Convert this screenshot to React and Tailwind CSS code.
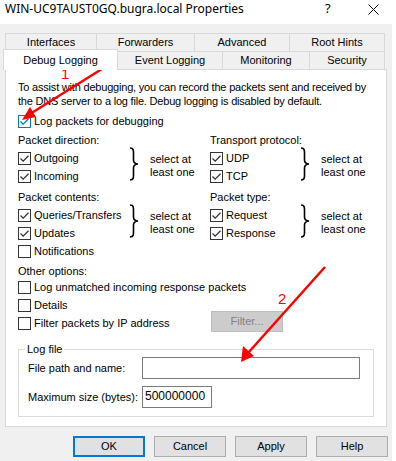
import React from "react";

const F = { fontFamily: '"Liberation Sans", Arial, sans-serif' };

function Check({ checked, blue }) {
  const c = blue ? "#0078d7" : "#333333";
  return (
    <span
      className={`inline-flex w-[13px] h-[13px] shrink-0 bg-white border items-center justify-center ${blue ? "border-[#0078d7]" : "border-[#333333]"}`}
    >
      {checked && (
        <svg width="11" height="11" viewBox="0 0 11 11">
          <path d="M1.5 5.5 L4.2 8.2 L9.5 2.8" fill="none" stroke={c} strokeWidth="1.3" />
        </svg>
      )}
    </span>
  );
}

function CB({ label, checked, blue, className = "" }) {
  return (
    <div className={`flex items-center h-[18px] ${className}`}>
      <Check checked={checked} blue={blue} />
      <span className="ml-[3px] whitespace-nowrap">{label}</span>
    </div>
  );
}

function Brace() {
  return (
    <svg width="10" height="34" viewBox="0 0 10 34" className="shrink-0">
      <path
        d="M1 1 C5 1 4.5 4 4.5 8 L4.5 13 C4.5 15.5 6 16.8 9 17 C6 17.2 4.5 18.5 4.5 21 L4.5 26 C4.5 30 5 33 1 33"
        fill="none"
        stroke="#000"
        strokeWidth="1.6"
      />
    </svg>
  );
}

function Group({ items, listW }) {
  return (
    <div className="flex">
      <div className="flex flex-col" style={{ width: listW }}>
        {items.map((it) => (
          <CB key={it[0]} label={it[0]} checked={it[1]} />
        ))}
      </div>
      <div className="flex items-start">
        <div className="mt-[-2px]">
          <Brace />
        </div>
        <div className="ml-[11px] mt-[4px] leading-[13px] w-[60px]">
          select at
          <br />
          least one
        </div>
      </div>
    </div>
  );
}

function Btn({ children, primary }) {
  return (
    <div
      className={`w-[72px] h-[21px] flex items-center justify-center bg-[#e1e1e1] ${primary ? "border-2 border-[#0078d7]" : "border border-[#adadad]"}`}
    >
      {children}
    </div>
  );
}

export default function App() {
  return (
    <div className="w-[396px] h-[461px] bg-white relative overflow-hidden text-[11px] text-black" style={F}>
      {/* title bar */}
      <div className="h-[24px] flex items-center pl-[5px] text-[12px]" style={{ fontFamily: '"Noto Sans", "Open Sans", sans-serif' }}>
        <span className="flex-1 mt-[-6px]">WIN-UC9TAUST0GQ.bugra.local Properties</span>
        <span className="w-[12px] mr-[31px] mt-[-6px] text-[13px]">?</span>
        <span className="mr-[17px] mt-[-6px]">
          <svg width="11" height="11" viewBox="0 0 11 11">
            <path d="M0.5 0.5 L10.5 10.5 M10.5 0.5 L0.5 10.5" stroke="#000" strokeWidth="1" />
          </svg>
        </span>
      </div>
      {/* body */}
      <div className="w-[392px] h-[437px] bg-[#f0f0f0] pt-[9px]">
        <div className="ml-[5px] w-[382px]">
          {/* tab row 1 */}
          <div className="flex h-[18px]">
            {[
              ["Interfaces", 92],
              ["Forwarders", 98],
              ["Advanced", 95],
              ["Root Hints", 95],
            ].map(([t, w], i) => (
              <div
                key={t}
                className={`h-[18px] flex items-center justify-center border-t border-[#d9d9d9] border-r ${i === 0 ? "border-l" : ""}`}
                style={{ width: w }}
              >
                {t}
              </div>
            ))}
          </div>
          {/* tab row 2 */}
          <div className="flex h-[18px] items-end relative z-10">
            <div className="w-[115px] h-[21px] ml-[-2px] mb-[-1px] bg-white border border-b-0 border-[#d9d9d9] flex items-start justify-center pt-[2px]">
              Debug Logging
            </div>
            {[
              ["Event Logging", 105],
              ["Monitoring", 87],
              ["Security", 75],
            ].map(([t, w]) => (
              <div
                key={t}
                className="h-[18px] flex items-center justify-center border-t border-r border-[#d9d9d9]"
                style={{ width: w }}
              >
                {t}
              </div>
            ))}
          </div>
          {/* panel */}
          <div className="h-[358px] bg-white border border-[#d9d9d9] pl-[12px] pt-[10px]">
            <div className="leading-[14px] tracking-[-0.2px]">
              To assist with debugging, you can record the packets sent and received by
              <br />
              the DNS server to a log file. Debug logging is disabled by default.
            </div>
            <CB label="Log packets for debugging" checked blue className="mt-[4px]" />
            <div className="flex mt-[1px]">
              <div className="w-[192px] flex flex-col">
                <div className="h-[18px] flex items-center">Packet direction:</div>
                <Group items={[["Outgoing", true], ["Incoming", true]]} listW={115} />
                <div className="h-[18px] flex items-center mt-[3px]">Packet contents:</div>
                <Group
                  items={[["Queries/Transfers", true], ["Updates", true], ["Notifications", false]]}
                  listW={115}
                />
              </div>
              <div className="flex flex-col">
                <div className="h-[18px] flex items-center">Transport protocol:</div>
                <Group items={[["UDP", true], ["TCP", true]]} listW={90} />
                <div className="h-[18px] flex items-center mt-[3px]">Packet type:</div>
                <Group items={[["Request", true], ["Response", true]]} listW={90} />
              </div>
            </div>
            <div className="h-[18px] flex items-center mt-[2px]">Other options:</div>
            <CB label="Log unmatched incoming response packets" className="-mt-[2px]" />
            <CB label="Details" />
            <div className="flex items-center">
              <CB label="Filter packets by IP address" className="w-[193px]" />
              <div className="w-[72px] h-[21px] mt-[-3px] bg-[#cccccc] border border-[#bfbfbf] text-[#838383] flex items-center justify-center">
                Filter...
              </div>
            </div>
            <fieldset className="w-[356px] h-[75px] mt-[10px] border border-[#dcdcdc] pl-[9px] pr-0 pb-0 m-0">
              <legend className="ml-[-3px] px-[2px] leading-[14px]">Log file</legend>
              <div className="flex items-center mt-[1px]">
                <span className="w-[114px]">File path and name:</span>
                <div className="w-[218px] h-[22px] border border-[#7a7a7a] bg-white"></div>
              </div>
              <div className="flex items-center mt-[7px]">
                <span className="w-[114px]">Maximum size (bytes):</span>
                <div className="w-[70px] h-[22px] border border-[#7a7a7a] bg-white px-[2px] pt-[2px] text-[12px] leading-[14px]">
                  500000000
                </div>
              </div>
            </fieldset>
          </div>
        </div>
        {/* buttons */}
        <div className="flex gap-[9px] ml-[73px] mt-[9px]">
          <Btn primary>OK</Btn>
          <Btn>Cancel</Btn>
          <Btn>Apply</Btn>
          <Btn>Help</Btn>
        </div>
      </div>
      {/* annotations */}
      <svg className="absolute inset-0 pointer-events-none" width="396" height="461" viewBox="0 0 396 461">
        <line x1="113" y1="62" x2="30" y2="114" stroke="#ff0000" strokeWidth="2.5" />
        <polygon points="22,120 30,107 36,117" fill="#ff0000" />
        <line x1="325" y1="267" x2="248" y2="353" stroke="#ff0000" strokeWidth="2.5" />
        <polygon points="241,362 243,346 254,356" fill="#ff0000" />
      </svg>
      <div className="absolute left-[61px] top-[66px] text-[15px] leading-[16px] text-[#ff0000]">1</div>
      <div className="absolute left-[278px] top-[291px] text-[15px] leading-[16px] text-[#ff0000]">2</div>
    </div>
  );
}
